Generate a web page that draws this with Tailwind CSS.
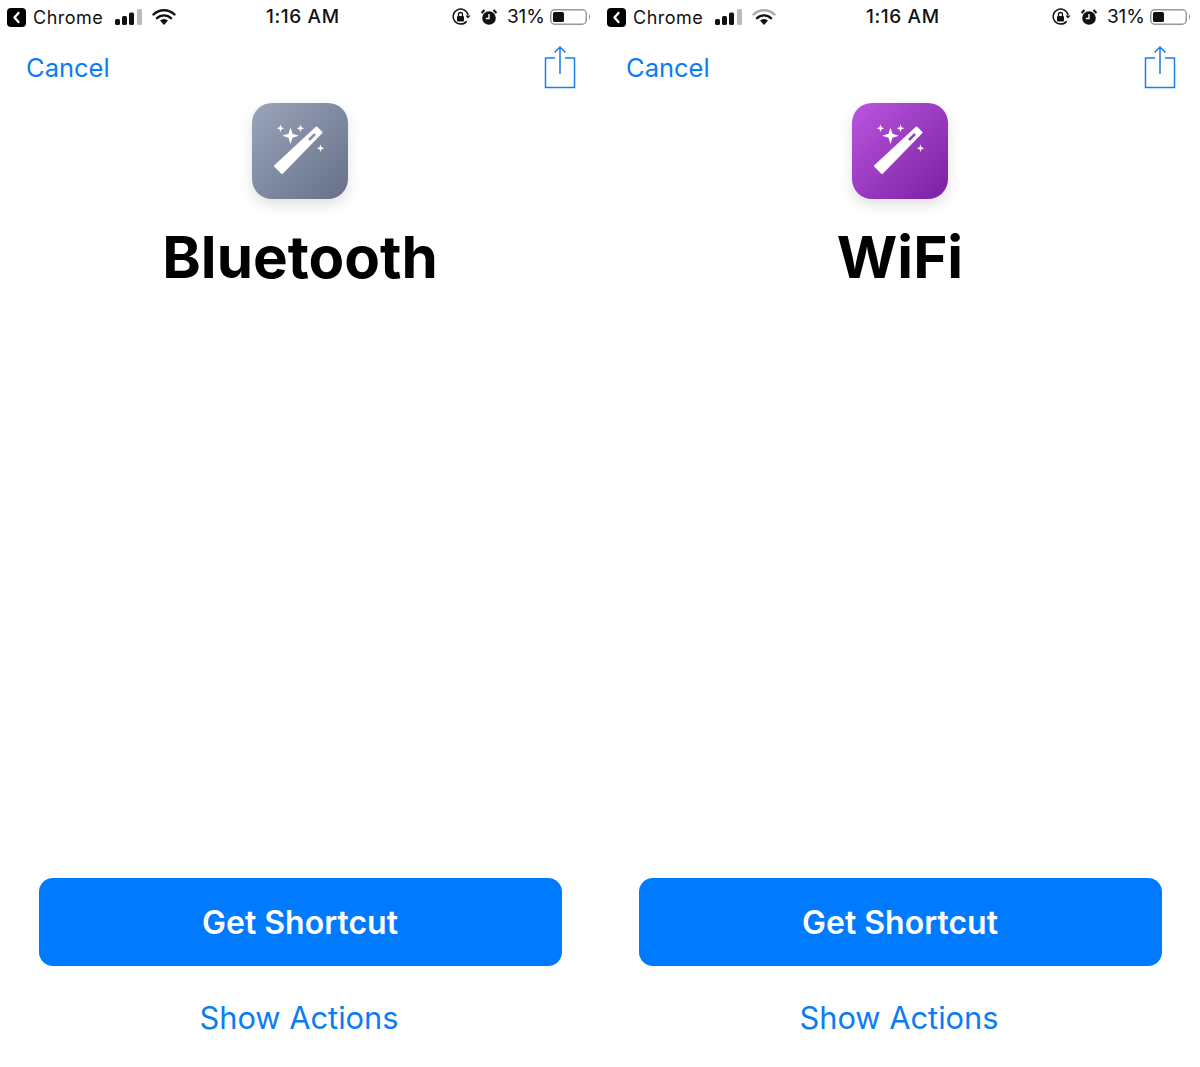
<!DOCTYPE html>
<html lang="en">
<head>
  <meta charset="UTF-8" />
  <title>Shortcuts</title>
  <script src="https://cdn.jsdelivr.net/npm/@tailwindcss/browser@4"></script>
</head>
<body class="bg-white font-['Inter',sans-serif]">
  <div class="flex w-[1200px] h-[1067px] overflow-hidden">

    <!-- Bluetooth -->
    <section class="w-[600px] flex flex-col">
      <div class="relative h-[34px] flex items-center pl-[7px] pr-[8px] text-[18px] text-[#111]">
        <svg class="w-[19px] h-[19px] mr-[7px]" viewBox="0 0 19 19"><rect width="19" height="19" rx="4" fill="#000"/><path d="M11.5 5 7.5 9.5l4 4.5" fill="none" stroke="#fff" stroke-width="2.4" stroke-linecap="round" stroke-linejoin="round"/></svg>
        <span class="tracking-[0.5px]">Chrome</span>
        <svg class="w-[27px] h-[16px] ml-[12px]" viewBox="0 0 27 16"><rect x="0" y="10" width="5" height="6" rx="1.5" fill="#111"/><rect x="7" y="7" width="5" height="9" rx="1.5" fill="#111"/><rect x="14" y="3.500" width="5" height="12.500" rx="1.500" fill="#111"/><rect x="22" y="0" width="5" height="16" rx="1.500" fill="#bbb"/></svg>
        <svg class="w-[24px] h-[17px] ml-[10px]" viewBox="0 0 24 17"><path d="M1.500 5.500a15 15 0 0 1 21 0M5 9.200a10 10 0 0 1 14 0" fill="none" stroke="#111" stroke-width="2.400" stroke-linecap="round"/><path d="M8 11.500a6 6 0 0 1 8 0L12 16z" fill="#111"/></svg>
        <span class="absolute left-[266px] text-[19px] font-medium tracking-[0.6px]">1:16 AM</span>
        <div class="ml-auto flex items-center">
          <svg class="w-[19px] h-[18px]" viewBox="0 0 19 18"><path d="M16 7a7.500 7.500 0 1 0-1.400 6.200" fill="none" stroke="#111" stroke-width="1.500"/><path d="M13.500 7.500h5l-2.500 3z" fill="#111"/><rect x="5" y="8" width="7" height="5.500" rx="1" fill="#111"/><path d="M6.500 8V6.500a2 2 0 0 1 4 0V8" fill="none" stroke="#111" stroke-width="1.300"/></svg>
          <svg class="w-[18px] h-[18px] ml-[9px]" viewBox="0 0 18 18"><circle cx="9" cy="10" r="6.800" fill="#111"/><path d="M9 6v4.500H5.800" fill="none" stroke="#fff" stroke-width="1.400"/><path d="M1.500 5 4.500 2M16.500 5l-3-3" stroke="#111" stroke-width="2"/></svg>
          <span class="ml-[9px] text-[19px]">31%</span>
          <svg class="w-[42px] h-[18px] ml-[5px]" viewBox="0 0 42 18"><rect x="0.750" y="1.750" width="35.500" height="14.500" rx="4" fill="none" stroke="#999" stroke-width="1.500"/><rect x="3" y="4" width="11" height="10" rx="1.500" fill="#111"/><path d="M39 6.500c1.500.5 1.500 4.500 0 5z" fill="#999"/></svg>
        </div>
      </div>
      <div class="h-[67px] flex items-start justify-between pl-[26px] pr-[24px]">
        <span class="text-[25.5px] leading-[34px] mt-[17px] text-[#0a7df5]">Cancel</span>
        <svg class="w-[32px] h-[44px] mt-[11px]" viewBox="0 0 32 44" fill="none" stroke="#1a7fe8" stroke-width="1.500"><path d="M11 13H1.500v29.500h29V13H21M16 29V2M10.500 7.500 16 2l5.500 5.500"/></svg>
      </div>
      <div class="self-center w-[96px] h-[96px] mt-[2px] rounded-[20px] shadow-[0_6px_14px_rgba(0,0,0,0.12)] bg-gradient-to-br from-[#9aa4bb] to-[#667087]">
        <svg class="w-[96px] h-[96px]" viewBox="0 0 96 96" fill="#fff"><polygon points="30,70 23,63 64.500,24.500 69.500,29.500" stroke="#fff" stroke-width="2" stroke-linejoin="round"/><path d="M57 37 63 31" stroke="#8791a8" stroke-width="2.500"/><path d="M38.500 24.500l2 6.300 6.300 2-6.300 2-2 6.300-2-6.300-6.300-2 6.300-2zM28.500 21.500l1 2.800 2.800 1-2.800 1-1 2.800-1-2.800-2.800-1 2.800-1zM48.500 21.500l1 2.800 2.800 1-2.800 1-1 2.800-1-2.800-2.800-1 2.800-1zM68.500 41.500l1 2.800 2.800 1-2.800 1-1 2.800-1-2.800-2.800-1 2.800-1z"/></svg>
      </div>
      <h1 class="mt-[22px] text-center text-[58.300px] leading-[72px] font-bold text-black">Bluetooth</h1>
      <div class="flex-1"></div>
      <button class="self-center w-[523px] h-[88px] pt-[2px] rounded-[14px] bg-[#007aff] text-white text-[32px] font-semibold">Get Shortcut</button>
      <a class="mt-[32px] mb-[29px] pr-[2px] text-center text-[30.800px] leading-[40px] text-[#0a7df5]">Show Actions</a>
    </section>

    <!-- WiFi -->
    <section class="w-[600px] flex flex-col">
      <div class="relative h-[34px] flex items-center pl-[7px] pr-[8px] text-[18px] text-[#111]">
        <svg class="w-[19px] h-[19px] mr-[7px]" viewBox="0 0 19 19"><rect width="19" height="19" rx="4" fill="#000"/><path d="M11.5 5 7.5 9.5l4 4.5" fill="none" stroke="#fff" stroke-width="2.4" stroke-linecap="round" stroke-linejoin="round"/></svg>
        <span class="tracking-[0.5px]">Chrome</span>
        <svg class="w-[27px] h-[16px] ml-[12px]" viewBox="0 0 27 16"><rect x="0" y="10" width="5" height="6" rx="1.5" fill="#111"/><rect x="7" y="7" width="5" height="9" rx="1.5" fill="#111"/><rect x="14" y="3.500" width="5" height="12.500" rx="1.500" fill="#111"/><rect x="22" y="0" width="5" height="16" rx="1.500" fill="#bbb"/></svg>
        <svg class="w-[24px] h-[17px] ml-[10px]" viewBox="0 0 24 17"><path d="M1.500 5.500a15 15 0 0 1 21 0" fill="none" stroke="#aaa" stroke-width="2.400" stroke-linecap="round"/><path d="M5 9.200a10 10 0 0 1 14 0" fill="none" stroke="#111" stroke-width="2.400" stroke-linecap="round"/><path d="M8 11.500a6 6 0 0 1 8 0L12 16z" fill="#111"/></svg>
        <span class="absolute left-[266px] text-[19px] font-medium tracking-[0.6px]">1:16 AM</span>
        <div class="ml-auto flex items-center">
          <svg class="w-[19px] h-[18px]" viewBox="0 0 19 18"><path d="M16 7a7.500 7.500 0 1 0-1.400 6.200" fill="none" stroke="#111" stroke-width="1.500"/><path d="M13.500 7.500h5l-2.500 3z" fill="#111"/><rect x="5" y="8" width="7" height="5.500" rx="1" fill="#111"/><path d="M6.500 8V6.500a2 2 0 0 1 4 0V8" fill="none" stroke="#111" stroke-width="1.300"/></svg>
          <svg class="w-[18px] h-[18px] ml-[9px]" viewBox="0 0 18 18"><circle cx="9" cy="10" r="6.800" fill="#111"/><path d="M9 6v4.500H5.800" fill="none" stroke="#fff" stroke-width="1.400"/><path d="M1.500 5 4.500 2M16.500 5l-3-3" stroke="#111" stroke-width="2"/></svg>
          <span class="ml-[9px] text-[19px]">31%</span>
          <svg class="w-[42px] h-[18px] ml-[5px]" viewBox="0 0 42 18"><rect x="0.750" y="1.750" width="35.500" height="14.500" rx="4" fill="none" stroke="#999" stroke-width="1.500"/><rect x="3" y="4" width="11" height="10" rx="1.500" fill="#111"/><path d="M39 6.500c1.500.5 1.500 4.500 0 5z" fill="#999"/></svg>
        </div>
      </div>
      <div class="h-[67px] flex items-start justify-between pl-[26px] pr-[24px]">
        <span class="text-[25.5px] leading-[34px] mt-[17px] text-[#0a7df5]">Cancel</span>
        <svg class="w-[32px] h-[44px] mt-[11px]" viewBox="0 0 32 44" fill="none" stroke="#1a7fe8" stroke-width="1.500"><path d="M11 13H1.500v29.500h29V13H21M16 29V2M10.500 7.500 16 2l5.500 5.500"/></svg>
      </div>
      <div class="self-center w-[96px] h-[96px] mt-[2px] rounded-[20px] shadow-[0_6px_14px_rgba(0,0,0,0.12)] bg-gradient-to-br from-[#bb55e0] to-[#7a1fa2]">
        <svg class="w-[96px] h-[96px]" viewBox="0 0 96 96" fill="#fff"><polygon points="30,70 23,63 64.500,24.500 69.500,29.500" stroke="#fff" stroke-width="2" stroke-linejoin="round"/><path d="M57 37 63 31" stroke="#9a3cc4" stroke-width="2.500"/><path d="M38.500 24.500l2 6.300 6.300 2-6.300 2-2 6.300-2-6.300-6.300-2 6.300-2zM28.500 21.500l1 2.800 2.800 1-2.800 1-1 2.800-1-2.800-2.800-1 2.800-1zM48.500 21.500l1 2.800 2.800 1-2.800 1-1 2.800-1-2.800-2.800-1 2.800-1zM68.500 41.500l1 2.800 2.800 1-2.800 1-1 2.800-1-2.800-2.800-1 2.800-1z"/></svg>
      </div>
      <h1 class="mt-[22px] text-center text-[58.300px] leading-[72px] font-bold text-black">WiFi</h1>
      <div class="flex-1"></div>
      <button class="self-center w-[523px] h-[88px] pt-[2px] rounded-[14px] bg-[#007aff] text-white text-[32px] font-semibold">Get Shortcut</button>
      <a class="mt-[32px] mb-[29px] pr-[2px] text-center text-[30.800px] leading-[40px] text-[#0a7df5]">Show Actions</a>
    </section>

  </div>
</body>
</html>
